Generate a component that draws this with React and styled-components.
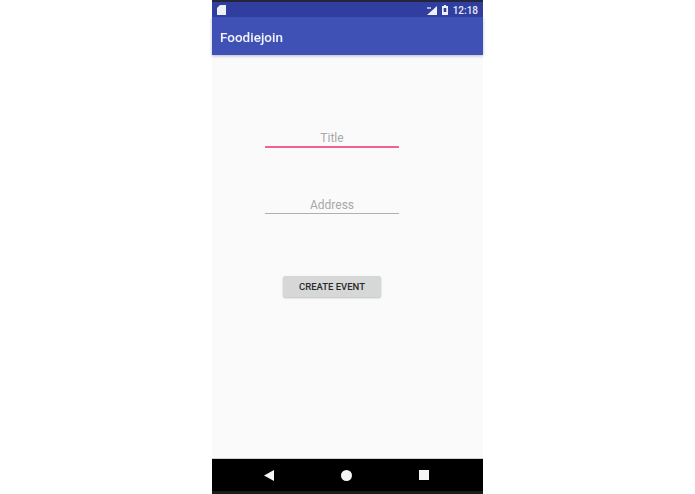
import React from 'react';
import styled, { createGlobalStyle } from 'styled-components';

const GlobalStyle = createGlobalStyle`
  html, body {
    margin: 0;
    height: 494px;
    background: #ffffff;
    overflow: hidden;
  }
`;

const Page = styled.div`
  width: 695px;
  height: 494px;
  display: flex;
  justify-content: center;
`;

const Phone = styled.div`
  width: 271px;
  height: 494px;
  display: flex;
  flex-direction: column;
  background: #fafafa;
  font-family: Roboto, "Liberation Sans", sans-serif;
  filter: blur(0.5px);
`;

const TopEdge = styled.div`
  height: 2px;
  background: #23253a;
`;

const StatusBar = styled.div`
  height: 15px;
  box-sizing: border-box;
  padding: 1px 5px 0;
  background: #303f9f;
  display: flex;
  align-items: center;
  justify-content: space-between;
  color: #e8eaf6;
  font-size: 10px;
  font-weight: 500;
`;

const StatusRight = styled.div`
  display: flex;
  align-items: center;
  gap: 5px;
`;

const AppBar = styled.div`
  height: 38px;
  box-sizing: border-box;
  padding: 2px 0 0 8px;
  background: #3f51b5;
  box-shadow: 0 1px 3px rgba(60, 60, 120, 0.35);
  display: flex;
  align-items: center;
  color: #f2f3fa;
  font-size: 13.5px;
  font-weight: 500;
  position: relative;
`;

const Content = styled.div`
  flex: 1;
  display: flex;
  flex-direction: column;
  align-items: center;
  padding-top: 73px;
  padding-right: 31px;
`;

const Field = styled.div`
  width: 134px;
  height: 17px;
  padding-top: 1px;
  margin-bottom: 47px;
  box-sizing: content-box;
  border-bottom: ${(p) => (p.$active ? '2px solid #f06292' : '1px solid #b0b0b0')};
  color: #a8a8a8;
  font-size: 12px;
  line-height: 18px;
  text-align: center;
`;

const Button = styled.button`
  width: 98px;
  height: 21px;
  margin-top: 15px;
  border: none;
  border-radius: 2px;
  background: #d6d7d7;
  box-shadow: 0 1px 2px rgba(0, 0, 0, 0.25);
  color: #2a2a2a;
  font-family: inherit;
  font-size: 9.5px;
  font-weight: 500;
  padding: 0;
`;

const NavBar = styled.div`
  height: 33px;
  background: #000000;
  border-top: 1px solid #cfcfcf;
  box-sizing: border-box;
  display: flex;
  align-items: center;
  justify-content: center;
  gap: 67px;
  padding-right: 2px;
`;

const NavEdge = styled.div`
  height: 3px;
  background: #1c1c1c;
`;

function App() {
  return (
    <>
      <GlobalStyle />
      <Page>
        <Phone>
          <TopEdge />
          <StatusBar>
            <svg width="9" height="10" viewBox="0 0 9 10">
              <path d="M3 0H9V10H0V3Z" fill="#eef0f8" />
            </svg>
            <StatusRight>
              <svg width="10" height="9" viewBox="0 0 10 9">
                <path d="M10 0V9H0Z" fill="#eef0f8" />
                <path d="M0 1H4V3H0Z" fill="#aab0d8" />
              </svg>
              <svg width="6" height="10" viewBox="0 0 6 10">
                <path d="M2 0H4V1H6V10H0V1H2Z" fill="#eef0f8" />
                <path d="M1.7 3H4.3V7H1.7Z" fill="#303f9f" />
              </svg>
              <span>12:18</span>
            </StatusRight>
          </StatusBar>
          <AppBar>Foodiejoin</AppBar>
          <Content>
            <Field $active>Title</Field>
            <Field>Address</Field>
            <Button>CREATE EVENT</Button>
          </Content>
          <NavBar>
            <svg width="10" height="11" viewBox="0 0 10 11">
              <path d="M0 5.5L10 0V11Z" fill="#f5f5f5" />
            </svg>
            <svg width="11" height="11" viewBox="0 0 11 11">
              <circle cx="5.5" cy="5.5" r="5.5" fill="#f5f5f5" />
            </svg>
            <svg width="10" height="10" viewBox="0 0 10 10">
              <rect width="10" height="10" fill="#f5f5f5" />
            </svg>
          </NavBar>
          <NavEdge />
        </Phone>
      </Page>
    </>
  );
}

export default App;
